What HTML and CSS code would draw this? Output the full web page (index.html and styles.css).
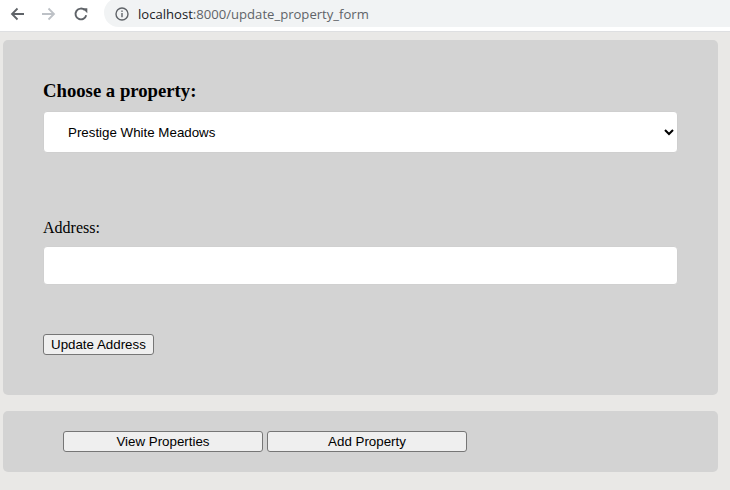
FILE: index.html
```html
<!DOCTYPE html>
<html>
<head>
<meta charset="utf-8">
<title>Update property</title>
<link rel="stylesheet" href="styles.css">
</head>
<body>
<div class="chrome">
  <div class="nav">
    <svg class="navicon" width="16" height="16" viewBox="0 0 16 16"><path d="M15 8H3.5M8.5 2.5L3 8l5.5 5.5" fill="none" stroke="#5f6368" stroke-width="1.8"/></svg>
    <svg class="navicon fwd" width="16" height="16" viewBox="0 0 16 16"><path d="M1 8h11.5M7.5 2.5L13 8l-5.5 5.5" fill="none" stroke="#bdc1c6" stroke-width="1.8"/></svg>
    <svg class="navicon reload" width="16" height="16" viewBox="0 0 16 16"><path d="M13.2 9.2A5.4 5.4 0 1 1 11.8 4.2" fill="none" stroke="#5f6368" stroke-width="1.9"/><path d="M9.3 2.2h5v5z" fill="#5f6368"/></svg>
  </div>
  <div class="omnibox">
    <svg class="info" width="14" height="14" viewBox="0 0 14 14"><circle cx="7" cy="7" r="6" fill="none" stroke="#5f6368" stroke-width="1.4"/><rect x="6.3" y="6" width="1.4" height="4.2" fill="#5f6368"/><rect x="6.3" y="3.5" width="1.4" height="1.4" fill="#5f6368"/></svg>
    <span class="host">localhost</span><span class="path">:8000/update_property_form</span>
  </div>
</div>
<main class="page">
  <form class="panel main-panel">
    <h3 class="title">Choose a property:</h3>
    <select class="field select">
      <option>Prestige White Meadows</option>
    </select>
    <label class="label">Address:</label>
    <input class="field text" type="text">
    <div><button type="button" class="btn">Update Address</button></div>
  </form>
  <div class="panel nav-panel">
    <button type="button" class="btn wide">View Properties</button>
    <button type="button" class="btn wide">Add Property</button>
  </div>
</main>
</body>
</html>
```

FILE: styles.css
```css
html, body {
  margin: 0;
  padding: 0;
  background: #e9e8e6;
  width: 730px;
  height: 490px;
  overflow: hidden;
}
.chrome {
  height: 31px;
  background: #ffffff;
  border-bottom: 1px solid #dedfe1;
  display: flex;
  align-items: flex-start;
  box-sizing: content-box;
}
.nav {
  display: flex;
  align-items: center;
  height: 27px;
  padding-left: 9px;
  gap: 16px;
}
.navicon { display: block; }
.omnibox {
  margin-left: 15px;
  margin-top: -2px;
  flex: 1;
  height: 29px;
  background: #f1f3f4;
  border-radius: 15px 0 0 15px;
  display: flex;
  align-items: center;
  padding-top: 2px;
  box-sizing: border-box;
  padding-left: 11px;
  font-family: "Open Sans", "Noto Sans", sans-serif;
  font-size: 13.1px;
}
.info { margin-right: 9px; }
.host { color: #202124; }
.path { color: #5f6368; }

.page {
  padding: 8px 12px 0 3px;
}
.panel {
  background: #d3d3d3;
  border-radius: 5px;
}
.main-panel {
  margin: 0;
  padding: 40px 40px 40px 40px;
  display: flex;
  flex-direction: column;
}
.title {
  margin: 0 0 9px 0;
  font-family: "Liberation Serif", serif;
  font-size: 18.72px;
  font-weight: bold;
  line-height: 22px;
  color: #000;
}
.field {
  box-sizing: border-box;
  width: 100%;
  border: 1px solid #c8c8c8;
  border-radius: 4px;
  background: #fff;
  font-family: "Liberation Sans", Arial, sans-serif;
  font-size: 13.33px;
  color: #000;
  outline: none;
}
.select {
  height: 42px;
  padding: 0 10px 0 20px;
  border-color: #cfcfcf;
}
.label {
  margin-top: 66px;
  font-family: "Liberation Serif", serif;
  font-size: 16px;
  line-height: 18px;
  color: #000;
}
.text {
  margin-top: 9px;
  height: 39px;
  border-color: #d0d0d0;
}
.btn {
  margin: 0;
  font-family: "Liberation Sans", Arial, sans-serif;
  font-size: 13.33px;
  color: #000;
  background: #efefef;
  border: 1px solid #767676;
  border-radius: 3px;
  height: 21px;
  padding: 0 7px;
  line-height: 17px;
}
.main-panel .btn { margin-top: 49px; }
.nav-panel {
  margin-top: 16px;
  padding: 20px 60px 20px 60px;
  display: flex;
  align-items: flex-start;
  gap: 4px;
}
.wide { width: 200px; }
```
